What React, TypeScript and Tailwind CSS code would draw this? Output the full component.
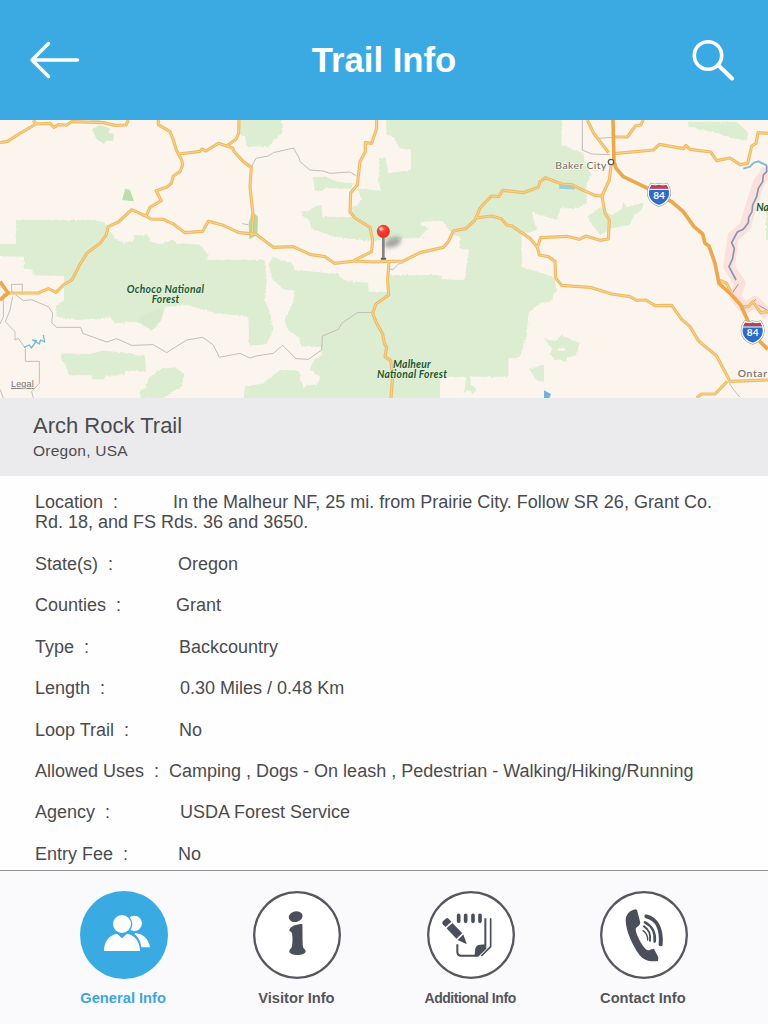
import { ReactNode, useState } from "react";

const ROADS = [
  "M0 68 L22 64 L60 40 L108 12 L150 10 L162 22 L175 14 L200 15 L215 5 L310 8 L345 16 L378 15 L385 0",
  "M100 0 L108 12",
  "M475 0 L475 14 L510 35 L520 60 L530 92 L545 120 L548 135 L540 155 L520 168 L514 190 L500 202 L468 212 L484 242 L450 262 L438 288",
  "M537 102 L600 94 L606 87 L618 93 L655 70 L680 78 L708 58 L716 40 L717 0",
  "M680 78 L698 84 L703 96 L730 125 L754 142 L750 200 L754 240 L760 290 L756 345",
  "M22 519 L115 519 L145 506 L168 517 L190 495 L215 480 L225 463 L238 436 L262 398 L300 370 L318 346 L325 320 L355 306 L395 269 L437 288 L452 297 L490 298 L520 312 L555 338 L608 334 L625 304 L670 316 L715 337 L768 343 L820 382 L880 380 L930 403 L975 410 L1003 430 L1065 423 L1120 426 L1210 423 L1260 398 L1330 382 L1345 365 L1360 333 L1398 325 L1425 300 L1440 265 L1460 242 L1475 228 L1496 230 L1508 211 L1570 218 L1615 202 L1620 185 L1636 173 L1685 192 L1715 194 L1750 211 L1785 226 L1806 228",
  "M1130 0 L1130 25 L1115 70 L1096 68 L1096 95 L1080 125 L1072 195 L1052 218 L1050 275 L1065 294 L1110 322 L1118 360 L1115 395 L1085 410 L1060 422",
  "M1167 426 L1163 480 L1166 525 L1145 540 L1128 552 L1118 580 L1130 610 L1148 642 L1153 670 L1160 682 L1155 710 L1172 722 L1178 770 L1173 834",
  "M1425 294 L1475 288 L1504 296 L1520 315 L1536 318 L1590 355 L1612 382 L1618 405 L1645 410 L1665 424 L1667 475 L1685 496 L1770 502 L1835 522 L1890 530 L1910 541 L1938 540 L1965 557 L2015 556 L2045 598 L2070 620 L2095 662 L2150 708 L2190 784 L2304 780",
  "M2182 784 L2145 822 L2105 822 L2090 834",
  "M1612 382 L1622 353 L1700 349 L1738 358 L1758 348 L1800 361 L1825 357 L1828 300 L1815 280 L1806 228 L1828 180 L1834 130",
  "M1762 0 L1780 38 L1826 98",
  "M1840 51 L1882 51 L1906 18 L1922 15 L1930 0",
  "M1842 101 L1960 90 L1978 73 L2050 86 L2058 76 L2070 88 L2132 96 L2150 122 L2190 114 L2220 134 L2243 130 L2255 78 L2268 70 L2274 38 L2304 40",
  "M2225 560 L2245 560 L2258 545 L2282 578 L2304 575",
  "M2156 480 L2180 490 L2192 515",
];

const MAIN_FOREST =
  "M1158 -20 L1160 45 L1178 48 L1198 85 L1233 90 L1233 150 L1165 160 L1158 115 L1137 115 L1136 180 L1143 212 L1070 205 L1086 235 L1073 255 L1053 262 L1060 292 L968 290 L963 255 L936 262 L933 270 L903 275 L910 290 L928 300 L933 325 L1003 350 L1110 362 L1290 352 L1260 350 L1285 325 L1262 315 L1262 305 L1328 303 L1358 345 L1380 350 L1380 385 L1408 390 L1400 430 L1395 480 L1325 478 L1325 465 L1170 466 L1165 515 L1105 515 L1105 490 L1030 480 L1015 462 L885 450 L875 430 L820 412 L806 430 L815 475 L850 508 L885 515 L880 545 L853 600 L865 630 L895 650 L905 677 L965 682 L965 705 L940 720 L930 750 L960 770 L955 790 L910 802 L895 750 L840 750 L790 790 L735 800 L728 860 L1320 860 L1320 770 L1525 770 L1525 715 L1560 710 L1580 650 L1585 580 L1620 548 L1650 545 L1670 510 L1660 470 L1565 440 L1565 345 L1610 330 L1595 275 L1620 285 L1670 300 L1680 265 L1730 265 L1760 250 L1760 190 L1775 165 L1755 130 L1750 100 L1685 75 L1685 -20 Z";

const WEST_FOREST =
  "M-20 372 L48 372 L48 300 L270 300 L312 306 L325 325 L345 355 L372 370 L400 362 L402 346 L445 346 L452 366 L480 372 L520 360 L530 370 L602 374 L625 405 L618 420 L795 420 L800 480 L795 540 L810 580 L820 630 L800 672 L748 677 L745 590 L650 580 L560 555 L495 560 L485 600 L455 632 L412 605 L345 610 L330 592 L235 600 L170 590 L168 558 L192 540 L192 468 L98 466 L98 448 L72 446 L72 410 L-20 408 Z";

const SHIELD =
  "M-23 -31 Q-12 -26 0 -31 Q12 -26 23 -31 Q38 -10 29 11 Q22 26 0 34 Q-22 26 -29 11 Q-38 -10 -23 -31 Z";

function Shield({ x, y }: { x: number; y: number }) {
  return (
    <g transform={`translate(${x} ${y})`}>
      <path d={SHIELD} fill="#2d69be" stroke="#8a8f98" strokeWidth="7" />
      <path d={SHIELD} fill="#2d6cc4" stroke="#fff" strokeWidth="4" />
      <path d="M-23 -28 Q-12 -23 0 -28 Q12 -23 23 -28 L28 -17 H-28 Z" fill="#c93a50" />
      <path d="M-29 -15 H29" stroke="#fff" strokeWidth="3" />
      <text
        y="13"
        textAnchor="middle"
        fill="#fff"
        fontSize="30"
        fontWeight="700"
        fontFamily="Lato, sans-serif"
      >
        84
      </text>
    </g>
  );
}

function TrailMap() {
  return (
    <svg
      viewBox="0 0 2304 834"
      className="block h-[278px] w-full shrink-0 bg-[#fbf5ee]"
      fontFamily="Lato, sans-serif"
    >
      <defs>
        <filter id="pinShadow" x="-50%" y="-50%" width="200%" height="200%">
          <feGaussianBlur stdDeviation="6" />
        </filter>
        {/* ragged forest boundaries */}
        <filter id="ragged" x="0" y="0" width="100%" height="100%">
          <feTurbulence type="fractalNoise" baseFrequency="0.12" numOctaves="2" seed="4" />
          <feDisplacementMap in="SourceGraphic" scale="9" xChannelSelector="R" yChannelSelector="G" />
        </filter>
        <radialGradient id="pinHead" cx="0.4" cy="0.3" r="0.8">
          <stop offset="0" stopColor="#ff7a6c" />
          <stop offset="0.35" stopColor="#fb3b30" />
          <stop offset="1" stopColor="#e02a22" />
        </radialGradient>
      </defs>

      <g fill="#dcedd1" filter="url(#ragged)">
        <path d={WEST_FOREST} />
        <path d={MAIN_FOREST} />
        <path d="M718 -20 H846 V40 L820 60 L805 82 L740 78 L735 48 L720 42 Z" />
        <path d="M938 172 L975 170 L1015 185 L1060 190 L1055 206 L975 205 L965 215 L945 212 Z" />
        <path d="M182 700 L270 702 L310 692 L395 700 L405 706 L435 708 L438 754 L375 752 L372 765 L316 768 L314 778 L276 778 L274 766 L205 766 L196 730 L186 724 Z" />
        <path d="M420 812 L440 800 L445 775 L480 748 L525 742 L553 762 L545 800 L510 820 L490 834 L422 834 Z" />
        <path d="M1762 290 L1800 262 L1835 285 L1865 268 L1870 245 L1880 262 L1930 248 L1928 265 L1900 290 L1890 315 L1835 325 L1800 345 L1780 320 Z" />
        <path
          fillRule="evenodd"
          d="M1632 655 L1665 664 L1685 646 L1720 662 L1738 668 L1730 705 L1705 712 L1695 725 L1665 718 L1650 705 L1655 685 Z M1672 686 L1690 682 L1695 692 L1676 694 Z"
        />
        <path d="M1588 745 L1610 742 L1616 735 L1632 735 L1632 785 L1610 782 Z" />
        <path d="M2064 5 L2210 5 L2245 38 L2240 62 L2200 55 L2140 35 L2095 30 L2085 22 L2066 24 Z" />
        <path d="M1398 768 L1412 772 L1412 795 L1428 805 L1420 825 L1405 808 L1390 820 L1396 795 Z" />
        <path d="M2298 270 H2320 V360 H2298 Z" />
      </g>
      <g fill="#cfe7c3">
        <path d="M276 28 L300 15 L330 25 L325 38 L342 42 L340 62 L318 62 L312 72 L290 58 Z" opacity="0.8" />
        <path d="M270 0 H302 L298 8 L278 6 Z" />
        <path d="M376 206 L390 210 L402 244 L366 240 Z" fill="#b9dfab" />
        <path d="M756 275 L774 290 L772 345 L748 358 L746 310 Z" fill="#b3dc9d" />
        <path d="M420 590 L480 565 L490 575 L470 620 L452 634 L445 618 L416 608 Z" opacity="0.4" />
      </g>

      <g fill="none" stroke="#fbe0dc" strokeWidth="34" strokeLinejoin="round">
        <path d="M2304 150 L2275 190 L2250 270 L2235 320 L2200 350 L2187 440 L2220 490 L2205 530 L2235 565 L2265 545 L2304 585" />
      </g>
      <g fill="none" stroke="#c2beb8" strokeWidth="3" strokeLinejoin="round">
        <path d="M36 520 L34 493 L67 493 L67 515 M48 525 L70 542 L95 539 L145 560 L158 580 L155 608 L170 622 L242 622 L248 640 L320 666 L350 656 L395 676 L460 674 L500 698 L560 660 L608 652 L640 675 L658 712 L720 700 L750 714 L768 708 L820 700 L848 676 L888 716 L925 718 L965 690 L967 648 L1015 628 L1025 610 L1072 578 L1120 577" />
        <path d="M38 530 L30 570 L16 605 L45 635 L45 660 L55 655 L76 685 L76 724 L118 724 L118 790 L95 815 L100 834 M10 520 L10 590 L0 612 M0 808 L10 834" />
        <path d="M754 142 L768 115 L805 108 L820 98 L880 84 L898 115 L900 125 L930 150 L970 153 L990 160 L1050 156 L1070 168" />
        <path d="M1747 0 L1747 90 L1775 102 L1830 104 M1795 55 L1840 52 M2188 790 L2200 808 L2220 832 M1167 448 L1180 448 L1195 432 L1210 428 M726 311 L745 314" />
      </g>
      <g fill="none" stroke="#8297b1" strokeWidth="5" strokeLinejoin="round">
        <path d="M2300 136 L2300 155 L2290 165 L2288 185 L2275 205 L2270 230 L2258 255 L2256 275 L2246 292 L2245 308 L2230 328 L2212 336 L2195 368 L2203 385 L2198 415 L2187 440 L2208 480" />
        <path d="M2215 492 L2198 518 M2236 565 L2268 538 M2275 555 L2304 572" stroke="#b98e93" strokeWidth="3" />
        <path d="M2230 146 L2250 140 L2262 128 L2275 124 L2300 136" stroke="#83b9dc" strokeWidth="6" />
        <path d="M1678 200 L1725 202" stroke="#9dcbd8" strokeWidth="13" />
        <path d="M72 682 L88 675 L94 684 L110 662 L98 660 L118 672 L122 660 L134 666 L130 645" stroke="#72b7dc" strokeWidth="4" />
      </g>
      <path d="M1632 811 L1653 822 L1648 834 H1632 Z" fill="#71b3d9" />

      <g fill="none" stroke="#efba64" strokeWidth="9.5" strokeLinejoin="round">
        {ROADS.map((d) => (
          <path key={d} d={d} />
        ))}
      </g>
      <g fill="none" stroke="#f9d591" strokeWidth="3" strokeLinejoin="round">
        {ROADS.map((d) => (
          <path key={d} d={d} />
        ))}
      </g>
      <path
        d="M0 485 L24 519 L0 540 M1839 0 L1842 125 L1848 145 L1870 170 L1945 206 L1980 228 L2015 245 L2050 275 L2082 320 L2108 342 L2115 370 L2127 378 L2145 430 L2157 490 L2195 525 L2222 555 L2245 605 L2280 665 L2304 688"
        fill="none"
        stroke="#eca84b"
        strokeWidth="11"
        strokeLinejoin="round"
      />

      <circle cx="1833" cy="126" r="8" fill="#fff" stroke="#625c55" strokeWidth="4" />
      <Shield x={1977} y={223} />
      <Shield x={2258} y={636} />

      <ellipse
        cx="1178"
        cy="367"
        rx="27"
        ry="14"
        fill="#555"
        opacity="0.5"
        transform="rotate(-20 1178 367)"
        filter="url(#pinShadow)"
      />
      <path d="M1145 416 H1156" stroke="#555" strokeWidth="6" strokeLinecap="round" />
      <path d="M1150 350 V415" stroke="#85827f" strokeWidth="8" />
      <circle cx="1150" cy="334" r="19.5" fill="url(#pinHead)" />
      <circle cx="1143" cy="327" r="5" fill="#ffd0ca" />

      <g stroke="#fbf7ef" strokeWidth="4" paintOrder="stroke" fill="#7a746d">
        <text x="1666" y="147" fontSize="31" fontWeight="500" textLength="153">
          Baker City
        </text>
        <text x="2213" y="772" fontSize="31" fontWeight="600" textLength="88">
          Ontar
        </text>
      </g>
      <g
        fill="#20572f"
        fontSize="31"
        fontWeight="700"
        fontStyle="italic"
        stroke="#e9f4e1"
        strokeWidth="3"
        paintOrder="stroke"
      >
        <text x="380" y="519" textLength="232">
          Ochoco National
        </text>
        <text x="455" y="549" textLength="83">
          Forest
        </text>
        <text x="1179" y="743" textLength="113">
          Malheur
        </text>
        <text x="1131" y="773" textLength="210">
          National Forest
        </text>
        <text x="2269" y="274">
          Na
        </text>
      </g>
      <text
        x="33"
        y="801"
        fontSize="27"
        textLength="68"
        fill="#77716b"
        fontFamily="Liberation Sans, sans-serif"
        textDecoration="underline"
      >
        Legal
      </text>
    </svg>
  );
}

// labels are padded with spaces, the values follow in the same line of text
const DETAILS = [
  { label: "Location", gap: 11, value: "In the Malheur NF, 25 mi. from Prairie City. Follow SR 26, Grant Co. Rd. 18, and FS Rds. 36 and 3650." },
  { label: "State(s)", gap: 13, value: "Oregon" },
  { label: "Counties", gap: 11, value: "Grant" },
  { label: "Type", gap: 18, value: "Backcountry" },
  { label: "Length", gap: 15, value: "0.30 Miles / 0.48 Km" },
  { label: "Loop Trail", gap: 10, value: "No" },
  { label: "Allowed Uses", gap: 2, value: "Camping , Dogs - On leash , Pedestrian - Walking/Hiking/Running" },
  { label: "Agency", gap: 14, value: "USDA Forest Service" },
  { label: "Entry Fee", gap: 10, value: "No" },
];

// icons share an 88x88 box, the same size as the round button
const GeneralIcon = () => (
  <svg viewBox="0 0 264 264" className="size-[88px]" fill="#fff">
    <circle cx="163" cy="97" r="23" />
    <path d="M165 126 C190 128 206 144 210 169 H184 C182 150 174 138 164 130 Z" />
    <circle cx="126" cy="99" r="31" fill="#3aaae2" />
    <circle cx="126" cy="99" r="27" />
    <path d="M72 180 C72 151 88 132 111 128 L126 142 L141 128 C164 132 180 151 180 180 Z" />
  </svg>
);

const VisitorIcon = () => (
  <svg viewBox="0 0 264 264" className="size-[88px]" fill="#4b4f5b">
    <ellipse cx="128" cy="77" rx="21" ry="16" transform="rotate(-12 128 77)" />
    <path d="M109 117 C112 106 130 99 148 99 C149 120 148 150 150 168 C151 174 158 174 158 181 C157 196 109 196 109 181 C109 174 116 173 117 166 C119 152 119 138 117 127 C116 121 108 122 109 117 Z" />
  </svg>
);

const AdditionalIcon = () => (
  <svg viewBox="0 0 264 264" className="size-[88px]" fill="none" stroke="#4b4f5b">
    <path d="M95 73 V91 M116 73 V91 M138 73 V91 M159 73 V91" strokeWidth="11" strokeLinecap="round" />
    <path d="M91 160 V184 Q92 194 102 194 H153 L175 172 V82" strokeWidth="6" strokeLinejoin="round" />
    <path d="M143 192 C145 179 142 167 154 162 L173 160 L174 173 L154 193 Z" fill="#4b4f5b" stroke="none" />
    <path d="M191 82 V167 L163 195" strokeWidth="5" />
    <g transform="translate(52 87) rotate(47)" fill="#4b4f5b" stroke="none">
      <path d="M6 -12 H18 V12 H6 Q0 12 0 6 V-6 Q0 -12 6 -12 Z" />
      <path d="M23 -12 H66 V12 H23 Z" />
      <path d="M71 -12 L99 0 L71 12 Z" />
    </g>
  </svg>
);

const ContactIcon = () => (
  <svg viewBox="0 0 264 264" className="size-[88px]" fill="none" stroke="#4b4f5b" strokeLinecap="round">
    <path
      d="M107 55 C90 57 77 70 77 89 C78 120 98 164 118 191 C130 207 150 214 174 210 L175 199 L162 174 C152 173 150 178 144 178 C133 177 108 134 107 115 C107 107 119 107 121 95 L111 57 Z"
      fill="#4b4f5b"
      stroke="none"
    />
    <path d="M139 76 C168 83 186 111 182 160" strokeWidth="12" />
    <path d="M135 94 C155 104 167 125 164 151" strokeWidth="8" />
    <path d="M132 106 C146 115 153 132 150 149" strokeWidth="6" />
    <path d="M129 119 C139 126 144 136 143 147" strokeWidth="4" />
  </svg>
);

type TabProps = {
  label: string;
  icon: ReactNode;
  isActive: boolean;
  labelClass: string;
  onClick: () => void;
};

function Tab({ label, icon, isActive, labelClass, onClick }: TabProps) {
  return (
    <button className="flex flex-1 flex-col items-center" onClick={onClick}>
      <span
        className={`flex size-[88px] items-center justify-center rounded-full ${
          isActive ? "bg-[#3aaae2]" : "bg-white shadow-[inset_0_0_0_2.3px_#55575f]"
        }`}
      >
        {icon}
      </span>
      <span
        className={`mt-[9px] leading-[20px] font-bold whitespace-nowrap ${labelClass} ${
          isActive ? "text-[#3ea7d9]" : "text-[#54555b]"
        }`}
      >
        {label}
      </span>
    </button>
  );
}

const TABS = [
  { label: "General Info", icon: <GeneralIcon />, labelClass: "text-[14.7px] -ml-[2px]" },
  { label: "Visitor Info", icon: <VisitorIcon />, labelClass: "text-[14.7px] -ml-[2px]" },
  { label: "Additional Info", icon: <AdditionalIcon />, labelClass: "text-[14px] tracking-[-0.45px] -ml-[1px]" },
  { label: "Contact Info", icon: <ContactIcon />, labelClass: "text-[14.7px] -ml-[2px]" },
];

export default function App() {
  const [activeTab, setActiveTab] = useState("General Info");

  return (
    <div className="flex h-[1024px] w-[768px] flex-col overflow-hidden bg-[#fefefe] font-['Liberation_Sans',Arial,sans-serif] text-[#4a4b4f]">
      <header className="flex h-[120px] shrink-0 items-center justify-between bg-[#3caae2] pr-[33px] pl-[29px] text-white">
        <button aria-label="Back">
          <svg width="52" height="40" viewBox="0 0 52 40" fill="none" stroke="currentColor" strokeWidth="3.4" strokeLinecap="round" strokeLinejoin="round">
            <path d="M19.5 3.5 L3 20 L19.5 36.5 M3 20 H48.5" />
          </svg>
        </button>
        <h1 className="mr-[5px] text-[34.7px] leading-[40px] font-bold">Trail Info</h1>
        <button aria-label="Search">
          <svg width="43" height="42" viewBox="0 0 43 42" fill="none" stroke="currentColor" strokeLinecap="round">
            <circle cx="16" cy="16.5" r="13.7" strokeWidth="3.6" />
            <path d="M26 26 L40 39.5" strokeWidth="4" />
          </svg>
        </button>
      </header>

      <TrailMap />

      <section className="flex h-[78px] shrink-0 flex-col bg-[#ebebee] pt-[14px] pl-[33px]">
        <h2 className="text-[22px] leading-[28px]">Arch Rock Trail</h2>
        <p className="text-[15.5px] leading-[22px] tracking-[0.25px]">Oregon, USA</p>
      </section>

      <main className="flex min-h-0 flex-1 flex-col gap-[20.75px] overflow-hidden px-[35px] pt-[15.6px]">
        {DETAILS.map(({ label, gap, value }) => (
          <p key={label} className="shrink-0 text-[18px] leading-[20.7px] whitespace-pre-wrap">
            {`${label}  :${" ".repeat(gap)}${value}`}
          </p>
        ))}
      </main>

      <nav className="flex h-[154px] shrink-0 border-t border-[#919198] bg-[#fafafd] px-[37.5px] pt-[20px]">
        {TABS.map((tab) => (
          <Tab
            key={tab.label}
            {...tab}
            isActive={activeTab === tab.label}
            onClick={() => setActiveTab(tab.label)}
          />
        ))}
      </nav>
    </div>
  );
}
